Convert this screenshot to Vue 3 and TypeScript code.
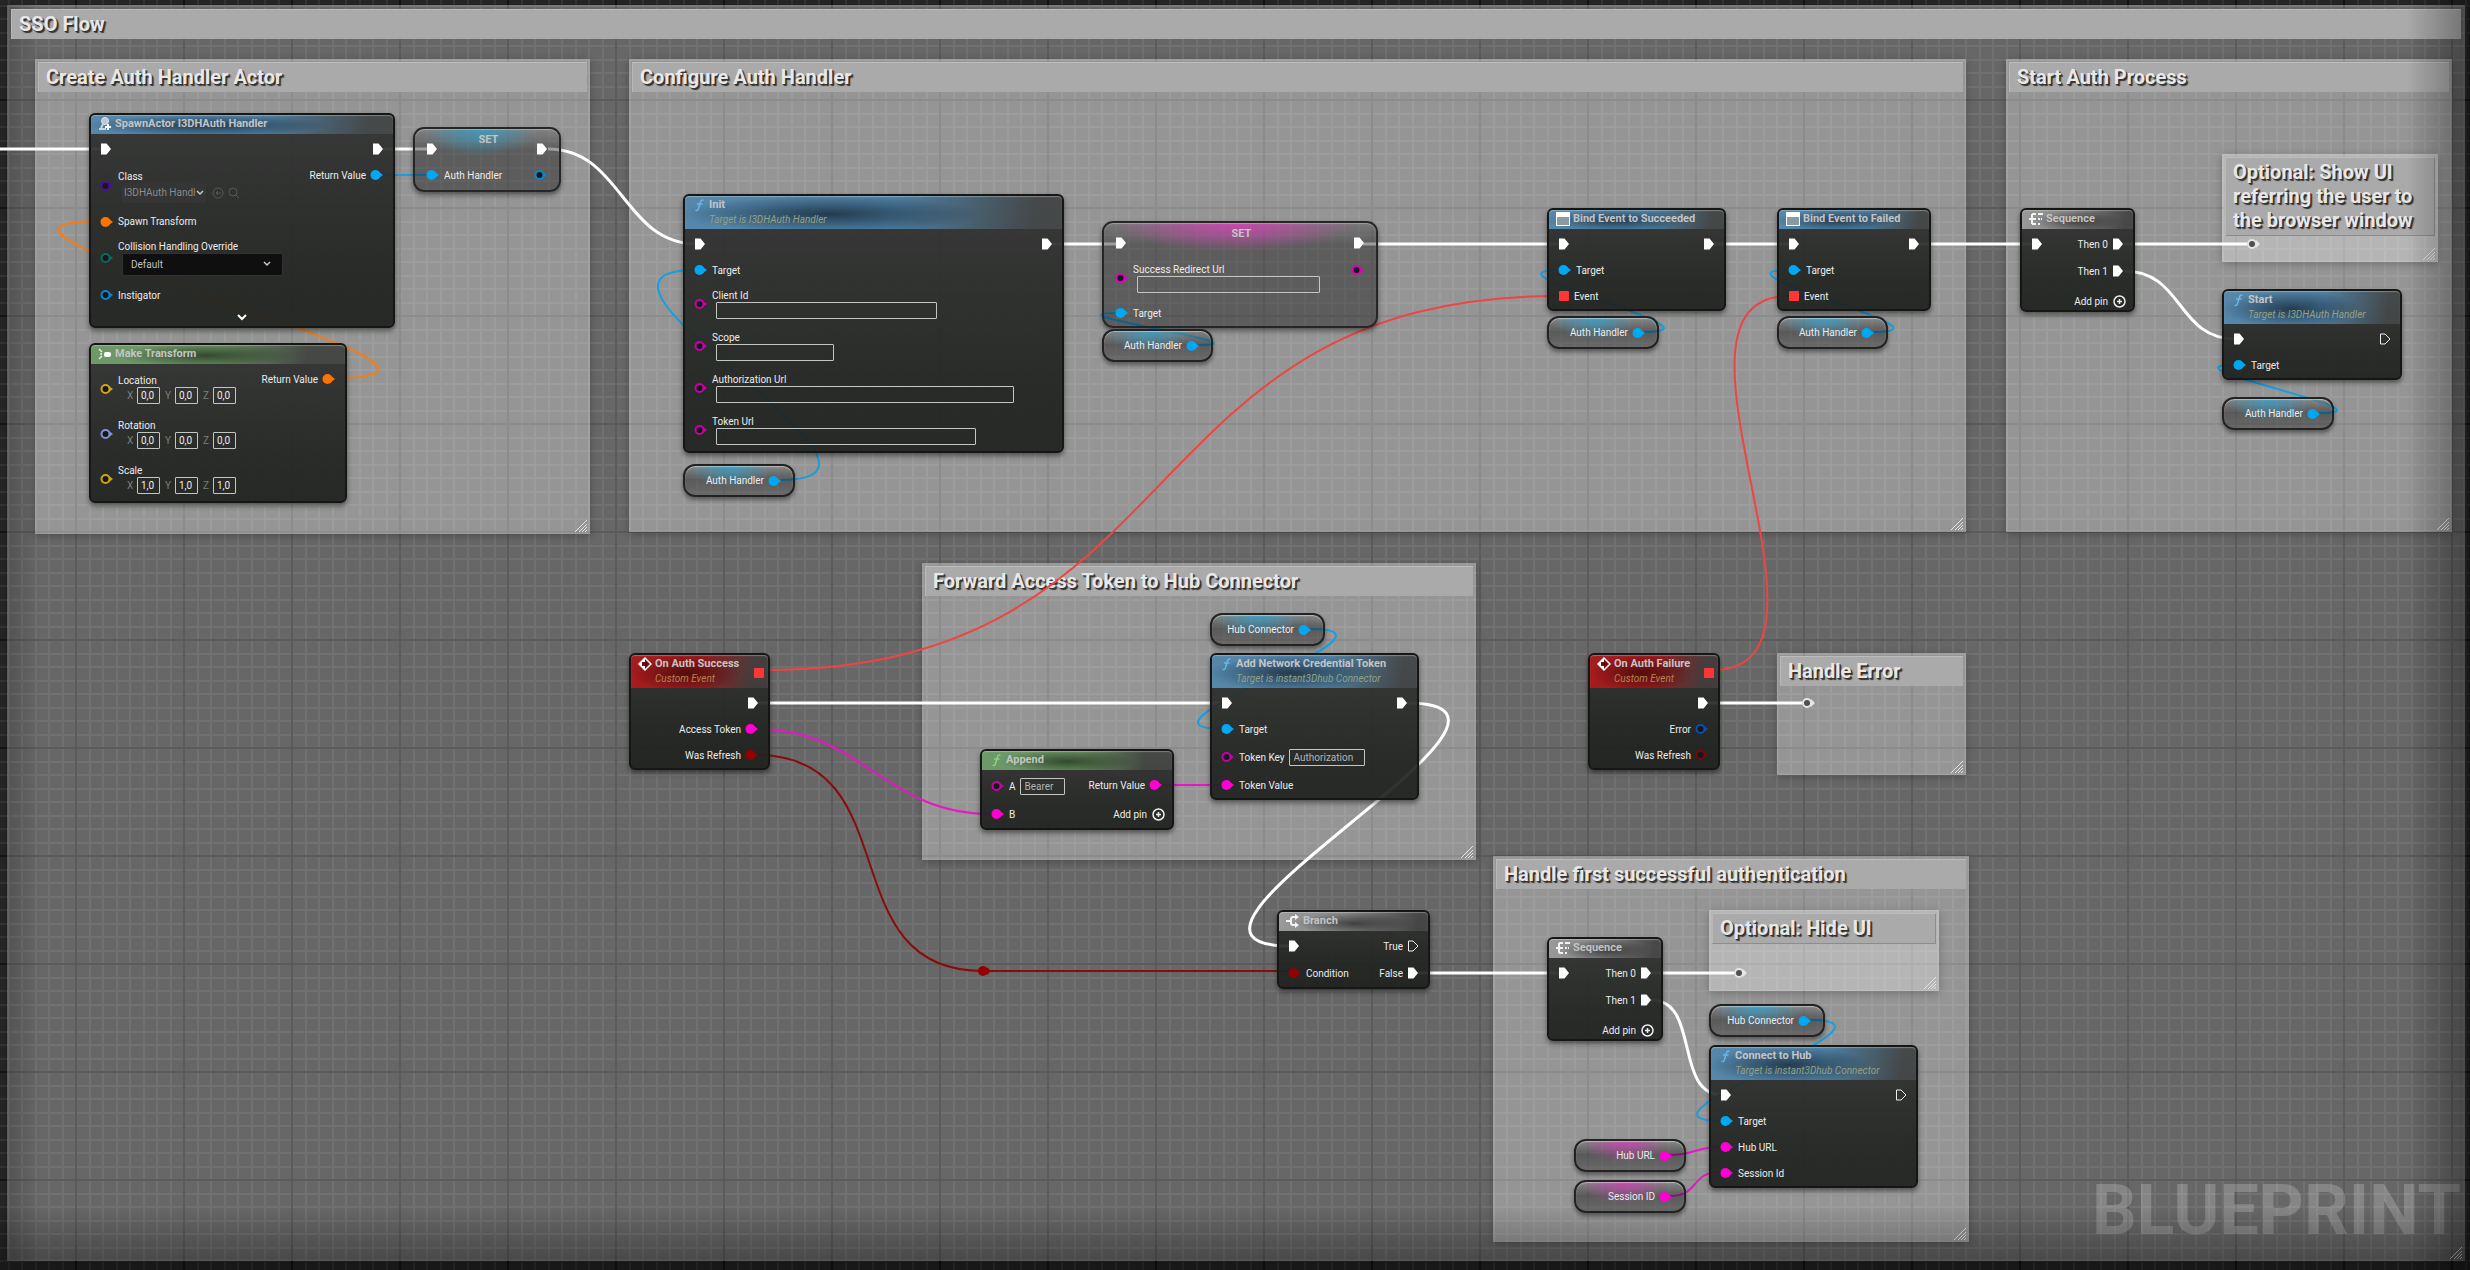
<script setup lang="ts">
type PinKind = 'exec' | 'data' | 'delegate'

interface Field {
  kind: 'text' | 'asset' | 'select' | 'vector'
  value?: string
  width?: number
  inline?: boolean
}

interface Row {
  h: number
  pin?: PinKind
  color?: string
  open?: boolean
  label?: string
  field?: Field
  addPin?: boolean
}

interface GraphNode {
  id: string
  x: number
  y: number
  w: number
  title: string
  sub?: string
  tone: 'blue' | 'green' | 'red' | 'gray' | 'set-blue' | 'set-pink'
  icon?: 'spawn' | 'make' | 'func' | 'bind' | 'sequence' | 'branch' | 'event'
  ins: Row[]
  outs: Row[]
  expand?: boolean
  delegateOut?: boolean
}

interface Comment {
  title: string
  x: number
  y: number
  w: number
  h: number
  nested?: boolean
}

interface Variable {
  label: string
  x: number
  y: number
  w: number
  tone: 'blue' | 'pink'
}

interface Wire {
  d: string
  kind: string
}

const BLUE = '#00a8f4'
const PINK = '#ff00d4'
const MAGENTA = '#c800a8'
const RED = '#930000'

const exec = (h = 26): Row => ({ h, pin: 'exec' })
const target = (h = 26): Row => ({ h, pin: 'data', color: BLUE, label: 'Target' })
const urlField = (label: string, width: number): Row => ({
  h: 42, pin: 'data', color: MAGENTA, open: true, label, field: { kind: 'text', width }
})
const vector = (label: string, value: string, color: string, h: number): Row => ({
  h, pin: 'data', color, open: true, label, field: { kind: 'vector', value }
})
const sequenceOuts = (): Row[] => [
  { h: 26, pin: 'exec', label: 'Then 0' },
  { h: 28, pin: 'exec', label: 'Then 1' },
  { h: 17, addPin: true }
]

const comments: Comment[] = [
  { title: 'Create Auth Handler Actor', x: 35, y: 59, w: 555, h: 475 },
  { title: 'Configure Auth Handler', x: 629, y: 59, w: 1337, h: 473 },
  { title: 'Start Auth Process', x: 2006, y: 59, w: 446, h: 473 },
  { title: 'Optional: Show UI referring the user to the browser window', x: 2222, y: 154, w: 216, h: 108, nested: true },
  { title: 'Forward Access Token to Hub Connector', x: 922, y: 563, w: 554, h: 297 },
  { title: 'Handle Error', x: 1777, y: 653, w: 189, h: 122 },
  { title: 'Handle first successful authentication', x: 1493, y: 856, w: 476, h: 386 },
  { title: 'Optional: Hide UI', x: 1709, y: 910, w: 230, h: 81, nested: true }
]

const nodes: GraphNode[] = [
  {
    id: 'spawn', x: 89, y: 113, w: 306, title: 'SpawnActor I3DHAuth Handler', tone: 'blue', icon: 'spawn', expand: true,
    ins: [
      exec(),
      { h: 48, pin: 'data', color: '#4b0d9c', open: true, label: 'Class', field: { kind: 'asset', value: 'I3DHAuth Handl' } },
      { h: 23, pin: 'data', color: '#ff7300', label: 'Spawn Transform' },
      { h: 49, pin: 'data', color: '#0b6a5b', open: true, label: 'Collision Handling Override', field: { kind: 'select', value: 'Default' } },
      { h: 26, pin: 'data', color: '#0a86cc', open: true, label: 'Instigator' }
    ],
    outs: [exec(), { h: 26, pin: 'data', color: BLUE, label: 'Return Value' }]
  },
  {
    id: 'set-handler', x: 413, y: 127, w: 148, title: 'SET', tone: 'set-blue',
    ins: [exec(), { h: 26, pin: 'data', color: BLUE, label: 'Auth Handler' }],
    outs: [exec(), { h: 26, pin: 'data', color: '#0a86cc', open: true }]
  },
  {
    id: 'transform', x: 89, y: 343, w: 258, title: 'Make Transform', tone: 'green', icon: 'make',
    ins: [
      vector('Location', '0,0', '#d3a313', 45),
      vector('Rotation', '0,0', '#8591d6', 45),
      vector('Scale', '1,0', '#d3a313', 45)
    ],
    outs: [{ h: 26, pin: 'data', color: '#ff7300', label: 'Return Value' }]
  },
  {
    id: 'init', x: 683, y: 194, w: 381, title: 'Init', sub: 'Target is I3DHAuth Handler', tone: 'blue', icon: 'func',
    ins: [exec(), target(), urlField('Client Id', 221), urlField('Scope', 118), urlField('Authorization Url', 298), urlField('Token Url', 260)],
    outs: [exec()]
  },
  {
    id: 'set-url', x: 1102, y: 221, w: 276, title: 'SET', tone: 'set-pink',
    ins: [
      exec(),
      { h: 44, pin: 'data', color: '#e000bb', open: true, label: 'Success Redirect Url', field: { kind: 'text', width: 183 } },
      target(26)
    ],
    outs: [exec(), { h: 28, pin: 'data', color: '#e000bb', open: true }]
  },
  {
    id: 'bind-ok', x: 1547, y: 208, w: 179, title: 'Bind Event to Succeeded', tone: 'blue', icon: 'bind',
    ins: [exec(), target(), { h: 26, pin: 'delegate', label: 'Event' }],
    outs: [exec()]
  },
  {
    id: 'bind-fail', x: 1777, y: 208, w: 154, title: 'Bind Event to Failed', tone: 'blue', icon: 'bind',
    ins: [exec(), target(), { h: 26, pin: 'delegate', label: 'Event' }],
    outs: [exec()]
  },
  { id: 'seq-start', x: 2020, y: 208, w: 115, title: 'Sequence', tone: 'gray', icon: 'sequence', ins: [exec()], outs: sequenceOuts() },
  {
    id: 'start', x: 2222, y: 289, w: 180, title: 'Start', sub: 'Target is I3DHAuth Handler', tone: 'blue', icon: 'func',
    ins: [exec(), target()],
    outs: [{ h: 26, pin: 'exec', open: true }]
  },
  {
    id: 'on-success', x: 629, y: 653, w: 141, title: 'On Auth Success', sub: 'Custom Event', tone: 'red', icon: 'event', delegateOut: true,
    ins: [],
    outs: [exec(), { h: 26, pin: 'data', color: PINK, label: 'Access Token' }, { h: 26, pin: 'data', color: RED, label: 'Was Refresh' }]
  },
  {
    id: 'append', x: 980, y: 749, w: 194, title: 'Append', tone: 'green', icon: 'func',
    ins: [
      { h: 28, pin: 'data', color: MAGENTA, open: true, label: 'A', field: { kind: 'text', value: 'Bearer', width: 45, inline: true } },
      { h: 28, pin: 'data', color: PINK, label: 'B' }
    ],
    outs: [{ h: 26, pin: 'data', color: PINK, label: 'Return Value' }, { h: 17, addPin: true }]
  },
  {
    id: 'credential', x: 1210, y: 653, w: 209, title: 'Add Network Credential Token', sub: 'Target is instant3Dhub Connector', tone: 'blue', icon: 'func',
    ins: [
      exec(),
      target(),
      { h: 30, pin: 'data', color: MAGENTA, open: true, label: 'Token Key', field: { kind: 'text', value: 'Authorization', width: 76, inline: true } },
      { h: 26, pin: 'data', color: PINK, label: 'Token Value' }
    ],
    outs: [exec()]
  },
  {
    id: 'branch', x: 1277, y: 910, w: 153, title: 'Branch', tone: 'gray', icon: 'branch',
    ins: [exec(), { h: 28, pin: 'data', color: RED, label: 'Condition' }],
    outs: [{ h: 26, pin: 'exec', open: true, label: 'True' }, { h: 28, pin: 'exec', label: 'False' }]
  },
  {
    id: 'on-failure', x: 1588, y: 653, w: 132, title: 'On Auth Failure', sub: 'Custom Event', tone: 'red', icon: 'event', delegateOut: true,
    ins: [],
    outs: [
      exec(),
      { h: 26, pin: 'data', color: '#0a4fae', open: true, label: 'Error' },
      { h: 26, pin: 'data', color: '#7a0707', open: true, label: 'Was Refresh' }
    ]
  },
  { id: 'seq-auth', x: 1547, y: 937, w: 116, title: 'Sequence', tone: 'gray', icon: 'sequence', ins: [exec()], outs: sequenceOuts() },
  {
    id: 'connect', x: 1709, y: 1045, w: 209, title: 'Connect to Hub', sub: 'Target is instant3Dhub Connector', tone: 'blue', icon: 'func',
    ins: [
      exec(),
      target(),
      { h: 26, pin: 'data', color: PINK, label: 'Hub URL' },
      { h: 26, pin: 'data', color: PINK, label: 'Session Id' }
    ],
    outs: [{ h: 26, pin: 'exec', open: true }]
  }
]

const variables: Variable[] = [
  { label: 'Auth Handler', x: 683, y: 464, w: 112, tone: 'blue' },
  { label: 'Auth Handler', x: 1102, y: 329, w: 111, tone: 'blue' },
  { label: 'Auth Handler', x: 1547, y: 316, w: 112, tone: 'blue' },
  { label: 'Auth Handler', x: 1777, y: 316, w: 111, tone: 'blue' },
  { label: 'Auth Handler', x: 2222, y: 397, w: 112, tone: 'blue' },
  { label: 'Hub Connector', x: 1210, y: 613, w: 115, tone: 'blue' },
  { label: 'Hub Connector', x: 1709, y: 1004, w: 116, tone: 'blue' },
  { label: 'Hub URL', x: 1574, y: 1139, w: 112, tone: 'pink' },
  { label: 'Session ID', x: 1574, y: 1180, w: 112, tone: 'pink' }
]

/* A spline leaves its output and enters its input horizontally; reach is the handle length. */
const curve = (x1: number, y1: number, x2: number, y2: number, reach: number) =>
  `M${x1} ${y1} C${x1 + reach} ${y1} ${x2 - reach} ${y2} ${x2} ${y2}`

const wires: Wire[] = [
  { kind: 'exec', d: 'M0 149 H104' },
  { kind: 'exec', d: 'M383 149 H430' },
  { kind: 'exec', d: curve(548, 149, 697, 244, 74) },
  { kind: 'exec', d: 'M1052 244 H1117' },
  { kind: 'exec', d: 'M1363 244 H1561' },
  { kind: 'exec', d: 'M1714 244 H1791' },
  { kind: 'exec', d: 'M1919 244 H2034' },
  { kind: 'exec', d: 'M2124 244 H2247' },
  { kind: 'exec', d: curve(2124, 271, 2236, 339, 60) },
  { kind: 'exec', d: 'M758 703 H1224' },
  { kind: 'exec', d: curve(1407, 703, 1291, 946, 180) },
  { kind: 'exec', d: 'M1418 973 H1561' },
  { kind: 'exec', d: 'M1651 973 H1734' },
  { kind: 'exec', d: curve(1651, 1000, 1723, 1095, 50) },
  { kind: 'exec', d: 'M1708 703 H1802' },
  { kind: 'object', d: 'M380 175 H430' },
  { kind: 'object', d: curve(781, 480, 696, 270, 160) },
  { kind: 'object', d: curve(1198, 345, 1117, 313, 78) },
  { kind: 'object', d: curve(1644, 332, 1561, 270, 93) },
  { kind: 'object', d: curve(1874, 332, 1790, 270, 92) },
  { kind: 'object', d: curve(2319, 413, 2236, 365, 86) },
  { kind: 'object', d: curve(1311, 629, 1223, 729, 113) },
  { kind: 'object', d: curve(1810, 1020, 1722, 1121, 113) },
  { kind: 'transform', d: curve(334, 378, 103, 221, 217) },
  { kind: 'delegate', d: curve(764, 670, 1559, 296, 434) },
  { kind: 'delegate', d: curve(1713, 670, 1789, 296, 150) },
  { kind: 'string', d: curve(755, 729, 992, 814, 110) },
  { kind: 'string', d: 'M1159 785 H1222' },
  { kind: 'string', d: curve(1669, 1155, 1721, 1147, 26) },
  { kind: 'string', d: curve(1669, 1196, 1721, 1172, 32) },
  { kind: 'bool', d: curve(756, 755, 983, 971, 155) },
  { kind: 'bool', d: 'M983 971 H1289' }
]

const reroutes = [
  { x: 2252, y: 244 },
  { x: 1807, y: 703 },
  { x: 1739, y: 973 }
]

const minor = [14, 27, 41, 54, 68, 81, 95]
const sides = ['ins', 'outs'] as const
const place = (item: { x: number; y: number; w: number; h?: number }) => ({
  left: `${item.x}px`,
  top: `${item.y}px`,
  width: `${item.w}px`,
  height: item.h ? `${item.h}px` : undefined
})
</script>

<template>
  <main class="graph">
    <svg class="layer" aria-hidden="true">
      <defs>
        <pattern id="grid" x="75" y="99" width="108" height="108" patternUnits="userSpaceOnUse">
          <g fill="#343434">
            <template v-for="m in minor" :key="m">
              <rect :x="m" y="0" width="2" height="108" />
              <rect x="0" :y="m" width="108" height="2" />
            </template>
          </g>
          <rect width="2" height="108" fill="#151515" />
          <rect width="108" height="2" fill="#151515" />
        </pattern>
      </defs>
      <rect width="100%" height="100%" fill="url(#grid)" />
    </svg>

    <section class="comment root">
      <h1 class="comment-title">SSO Flow</h1>
      <svg class="grip" viewBox="0 0 12 12" aria-hidden="true"><path d="M0 12 L12 0 M4 12 L12 4 M7 12 L12 7 M10 12 L12 10" /></svg>
    </section>

    <section v-for="c in comments" :key="c.title" class="comment" :class="{ nested: c.nested }" :style="place(c)">
      <h2 class="comment-title">{{ c.title }}</h2>
      <svg class="grip" viewBox="0 0 12 12" aria-hidden="true"><path d="M0 12 L12 0 M4 12 L12 4 M7 12 L12 7 M10 12 L12 10" /></svg>
    </section>

    <svg class="layer wires" aria-hidden="true">
      <path v-for="w in wires" :key="w.d" :class="w.kind" :d="w.d" />
      <g v-for="r in reroutes" :key="r.x" :transform="`translate(${r.x} ${r.y})`">
        <path d="M4 -4 L8 0 L4 4 Z" fill="#e6e6e6" />
        <circle r="4" fill="#505050" stroke="#e6e6e6" stroke-width="2" />
      </g>
      <circle cx="983" cy="971" r="5" fill="#930000" />
      <path d="M987 967 L991 971 L987 975 Z" fill="#930000" />
    </svg>

    <article v-for="n in nodes" :key="n.id" class="node" :class="n.tone" :style="place(n)">
      <header class="head" :class="{ tall: n.sub }">
        <svg v-if="n.icon === 'spawn'" class="icon" viewBox="0 0 14 14">
          <circle cx="7" cy="4" r="3.500" fill="#b9cbd8" stroke="#dfe8ee" />
          <path d="M5 7 L3 11 M1 12 H8" fill="none" stroke="#c9d6df" stroke-width="2" />
          <path d="M10 7 V13 M7 10 H13" stroke="#fff" stroke-width="2" />
        </svg>
        <svg v-else-if="n.icon === 'make'" class="icon" viewBox="0 0 14 14">
          <path d="M1 2 L4 5 M1 12 L4 9 M2 7 H4" stroke="#e8eee6" stroke-width="1.500" />
          <rect x="6" y="5" width="7" height="5" rx="2" fill="#fff" />
        </svg>
        <svg v-else-if="n.icon === 'func'" class="icon" viewBox="0 0 14 14">
          <path d="M11.500 2.500 Q9.500 1 8.500 4 L6.500 10.500 Q5.500 13.500 3.500 12 M5 6 H10.500" fill="none" :stroke="n.tone === 'green' ? '#86d386' : '#69b7ea'" stroke-width="1.500" />
        </svg>
        <svg v-else-if="n.icon === 'bind'" class="icon" viewBox="0 0 14 14">
          <rect x="0.500" y="0.500" width="13" height="13" fill="#8a9aa5" stroke="#fff" />
          <rect x="1" y="1" width="12" height="4" fill="#fff" />
        </svg>
        <svg v-else-if="n.icon === 'sequence'" class="icon" viewBox="0 0 14 14">
          <path d="M0 7 H7 M3 2 V12 M3 2 H7 M3 12 H7 M9 2 H14 M9 7 H11 M12 7 H13 M9 12 H11" fill="none" stroke="#f2f2f2" stroke-width="2" />
        </svg>
        <svg v-else-if="n.icon === 'branch'" class="icon" viewBox="0 0 14 14">
          <path d="M0 7 H5 M10 3 H7 Q5 3 5 5 V9 Q5 11 7 11 H10" fill="none" stroke="#f2f2f2" stroke-width="2" />
          <path d="M9 0 L13 3 L9 6 Z M9 8 L13 11 L9 14 Z" fill="#f2f2f2" />
        </svg>
        <svg v-else-if="n.icon === 'event'" class="icon" viewBox="0 0 14 14">
          <path d="M7 1 L13 7 L7 13 L1 7 Z" fill="#7a1112" stroke="#fff" stroke-width="1.500" />
          <path d="M7 1 V5 H4 V9 H7 V13 L1 7 Z" fill="#fff" />
          <path d="M7 4 L10 7 L7 10 V8 H5 V6 H7 Z" fill="#5a0d0e" />
        </svg>
        <div class="titles">
          <h3 class="title">{{ n.title }}</h3>
          <p v-if="n.sub" class="sub">{{ n.sub }}</p>
        </div>
        <i v-if="n.delegateOut" class="delegate-out"></i>
      </header>

      <div class="body">
        <div v-for="side in sides" :key="side" class="pins" :class="side">
          <div v-for="(r, i) in n[side]" :key="i" class="row" :class="{ adder: r.addPin }" :style="{ height: `${r.h}px` }">
            <button v-if="r.addPin" class="add-pin" type="button">
              Add pin
              <svg width="13" height="13" viewBox="0 0 13 13" aria-hidden="true">
                <circle cx="6.500" cy="6.500" r="5.500" fill="none" stroke="#eee" stroke-width="1.500" />
                <path d="M6.500 4 V9 M4 6.500 H9" stroke="#eee" stroke-width="1.500" />
              </svg>
            </button>
            <template v-else>
              <svg v-if="r.pin === 'exec'" class="pin-exec" viewBox="0 0 12 12">
                <path v-if="r.open" d="M1.500 1 H6 L11 6 L6 11 H1.500 Z" fill="none" stroke="#eee" />
                <path v-else d="M1 0.500 H6.500 L11 6 L6.500 11.500 H1 Z" fill="#fff" />
              </svg>
              <svg v-else-if="r.pin === 'delegate'" class="pin-exec" viewBox="0 0 12 12">
                <rect x="1" y="1" width="10" height="10" rx="1" fill="#ff3636" />
              </svg>
              <svg v-else class="pin-data" viewBox="0 0 14 12">
                <path d="M9 3 L13 6 L9 9 Z" :fill="r.color" />
                <circle v-if="r.open" cx="5.500" cy="6" r="4" fill="#14181a" :stroke="r.color" stroke-width="2" />
                <circle v-else cx="5.500" cy="6" r="5" :fill="r.color" />
              </svg>

              <div v-if="r.field" class="slot" :class="{ inline: r.field.inline }">
                <template v-if="r.field.kind === 'text'">
                  <label :for="`${n.id}-${i}`">{{ r.label }}</label>
                  <input :id="`${n.id}-${i}`" class="text-field" type="text" :value="r.field.value" :style="{ width: `${r.field.width}px` }" />
                </template>
                <template v-else-if="r.field.kind === 'asset'">
                  <label :for="`${n.id}-${i}`">{{ r.label }}</label>
                  <div class="asset">
                    <div class="picker asset-picker">
                      <select :id="`${n.id}-${i}`"><option>{{ r.field.value }}</option></select>
                      <svg class="caret" viewBox="0 0 8 6"><path d="M1 1 L4 4 L7 1" /></svg>
                    </div>
                    <button class="tool" type="button" aria-label="Use selected">
                      <svg viewBox="0 0 12 12"><circle cx="6" cy="6" r="5" /><path d="M9 6 H4 M6 4 L4 6 L6 8" /></svg>
                    </button>
                    <button class="tool" type="button" aria-label="Browse">
                      <svg viewBox="0 0 12 12"><circle cx="5" cy="5" r="4" /><path d="M8 8 L11 11" /></svg>
                    </button>
                  </div>
                </template>
                <template v-else-if="r.field.kind === 'select'">
                  <label :for="`${n.id}-${i}`">{{ r.label }}</label>
                  <div class="picker enum-picker">
                    <select :id="`${n.id}-${i}`"><option>{{ r.field.value }}</option></select>
                    <svg class="caret" viewBox="0 0 8 6"><path d="M1 1 L4 4 L7 1" /></svg>
                  </div>
                </template>
                <template v-else>
                  <span>{{ r.label }}</span>
                  <div class="vector">
                    <template v-for="axis in ['X', 'Y', 'Z']" :key="axis">
                      <label class="axis" :for="`${n.id}-${i}-${axis}`">{{ axis }}</label>
                      <input :id="`${n.id}-${i}-${axis}`" class="text-field number" type="text" :value="r.field.value" />
                    </template>
                  </div>
                </template>
              </div>
              <span v-else-if="r.label">{{ r.label }}</span>
            </template>
          </div>
        </div>
      </div>

      <button v-if="n.expand" class="expand" type="button" aria-label="Show advanced pins">
        <svg width="10" height="8" viewBox="0 0 10 8"><path d="M1 2 L5 6 L9 2" fill="none" stroke="#fff" stroke-width="2" /></svg>
      </button>
    </article>

    <article v-for="(v, i) in variables" :key="i" class="variable" :class="v.tone" :style="place(v)">
      <span>{{ v.label }}</span>
      <svg class="pin-data" viewBox="0 0 14 12">
        <path d="M9 3 L13 6 L9 9 Z" :fill="v.tone === 'blue' ? BLUE : PINK" />
        <circle cx="5.500" cy="6" r="5" :fill="v.tone === 'blue' ? BLUE : PINK" />
      </svg>
    </article>

    <div class="watermark">BLUEPRINT</div>
    <div class="vignette"></div>
  </main>
</template>

<style>
body {
  margin: 0;
  background: #262626;
}
</style>

<style scoped>
.graph {
  position: relative;
  min-height: 100vh;
  overflow: hidden;
  background: #262626;
  color: #ececec;
  font: 10px/13px Roboto, "Liberation Sans", sans-serif;
}

.graph * {
  box-sizing: border-box;
}

.layer {
  position: absolute;
  inset: 0;
  width: 100%;
  height: 100%;
}

/* comment boxes */
.comment {
  position: absolute;
  padding: 3px;
  background: rgba(255, 255, 255, 0.3);
  box-shadow: 0 2px 8px rgba(0, 0, 0, 0.25), inset 0 0 0 2px rgba(255, 255, 255, 0.05);
}

.comment.root {
  inset: 5px 5px 9px 7px;
  padding: 4px;
  background: linear-gradient(to right, rgba(0, 0, 0, 0.2), transparent 34px), rgba(255, 255, 255, 0.3);
}

.comment-title {
  margin: 0;
  padding: 2px 7px 3px;
  background: #aaa;
  border-top: 1px solid #bcbcbc;
  border-left: 1px solid #b8b8b8;
  color: #e8e8e8;
  font-size: 20px;
  font-weight: 700;
  line-height: 24px;
  text-shadow: 1px 1px 0 #333, 2px 2px 1px #333;
}

.nested .comment-title {
  border-right: 1px solid #8c8c8c;
  border-bottom: 1px solid #8c8c8c;
}

.grip {
  position: absolute;
  right: 3px;
  bottom: 2px;
  width: 12px;
  height: 12px;
  fill: none;
  stroke: #e4e4e4;
}

/* wires */
.wires path[class] {
  fill: none;
  stroke-width: 2;
}

.wires path.exec {
  stroke: #fff;
  stroke-width: 3;
}

.wires .object {
  stroke: #169fe0;
}

.wires .transform {
  stroke: #f57c14;
}

.wires .delegate {
  stroke: #ef4444;
}

.wires .string {
  stroke: #ea14c8;
}

.wires .bool {
  stroke: #8a0c0c;
}

/* nodes */
.node {
  position: absolute;
  border: 2px solid #151715;
  border-radius: 6px;
  background: linear-gradient(rgba(48, 49, 48, 0.92), rgba(32, 35, 32, 0.92) 70%, rgba(30, 32, 30, 0.92));
  box-shadow: 0 3px 5px rgba(0, 0, 0, 0.45);
}

.head {
  display: flex;
  gap: 3px;
  height: 19px;
  padding: 2px 4px 0 7px;
  border-radius: 4px 4px 0 0;
  box-shadow: inset 0 1px 1px rgba(255, 255, 255, 0.3);
}

.head.tall {
  height: 33px;
}

.blue .head {
  background: radial-gradient(ellipse 40% 55% at 38% 55%, rgba(20, 36, 50, 0.75), transparent), linear-gradient(100deg, #5688ab 0%, #4d7fa3 55%, rgba(80, 84, 86, 0.6) 92%);
}

.green .head {
  background: radial-gradient(ellipse 35% 60% at 45% 55%, rgba(32, 50, 28, 0.75), transparent), linear-gradient(100deg, #6e9a68 0%, #688f60 50%, rgba(80, 84, 80, 0.6) 85%);
}

.red .head {
  background: radial-gradient(ellipse 40% 55% at 40% 55%, rgba(60, 8, 8, 0.75), transparent), linear-gradient(100deg, #a81c1e 0%, #9a1a1c 50%, rgba(80, 70, 70, 0.6) 88%);
}

.gray .head {
  background: radial-gradient(ellipse 40% 55% at 50% 60%, rgba(40, 40, 40, 0.7), transparent), linear-gradient(100deg, #9a9a9a 0%, #848484 45%, rgba(84, 84, 84, 0.6) 92%);
}

.icon {
  flex: none;
  width: 14px;
  height: 14px;
}

.titles {
  flex: 1;
  white-space: nowrap;
}

.title {
  margin: 0;
  color: #c4c4c4;
  font-size: 11px;
  font-weight: 700;
  line-height: 14px;
}

.sub {
  margin: 1px 0 0;
  color: #93a183;
  font-size: 10px;
  font-style: italic;
  line-height: 14px;
}

.red .sub {
  color: #b28355;
}

.delegate-out {
  flex: none;
  align-self: center;
  width: 10px;
  height: 10px;
  border-radius: 1px;
  background: #ff3636;
}

.body {
  display: flex;
  justify-content: space-between;
  padding: 2px 9px 0;
}

.row {
  display: flex;
  align-items: center;
  gap: 4px;
  white-space: nowrap;
}

.outs .row {
  flex-direction: row-reverse;
}

.row.adder {
  margin: 8px -2px 0 0;
}

.pin-exec {
  flex: none;
  width: 12px;
  height: 12px;
}

.pin-data {
  flex: none;
  width: 14px;
  height: 12px;
}

/* setter nodes have a see-through plate and no title bar */
.set-blue,
.set-pink {
  border-color: #262626;
  border-radius: 11px;
}

.set-blue {
  background: radial-gradient(ellipse 40% 45% at 45% 0, rgba(40, 160, 205, 0.75), transparent), linear-gradient(rgba(110, 110, 110, 0.5), rgba(0, 0, 0, 0.38) 35%);
}

.set-pink {
  background: radial-gradient(ellipse 45% 28% at 48% 0, rgba(214, 62, 184, 0.85), transparent), linear-gradient(rgba(90, 90, 90, 0.5), rgba(0, 0, 0, 0.38) 22%);
}

.set-blue .head,
.set-pink .head {
  height: 24px;
  margin-bottom: -19px;
  border-radius: 9px 9px 0 0;
  text-align: center;
}

.set-blue .title,
.set-pink .title {
  padding-top: 2px;
}

.set-blue .body {
  padding: 2px 11px;
}

.set-pink .body {
  padding: 2px 11px 0;
}

/* fields */
.slot {
  display: flex;
  flex-direction: column;
}

.slot.inline {
  flex-direction: row;
  align-items: center;
  gap: 4px;
}

.text-field {
  height: 17px;
  margin-left: 4px;
  padding: 0 4px;
  border: 1px solid #c4c6c4;
  border-radius: 1px;
  background: transparent;
  color: #b4b4b4;
  font: inherit;
}

.inline .text-field {
  margin-left: 0;
}

.vector {
  display: flex;
  align-items: center;
  gap: 3px;
  margin-left: 9px;
}

.axis {
  width: 7px;
  color: #7c7c7c;
}

.text-field.number {
  width: 23px;
  margin: 0 2px 0 0;
  padding: 0 3px;
  color: #eee;
}

.picker {
  display: flex;
  align-items: center;
  margin-left: 4px;
}

.picker select {
  width: 100%;
  height: 100%;
  padding: 0 8px;
  border: 1px solid #303230;
  border-radius: 2px;
  background: #0f0f0f;
  color: #c0c0c0;
  font: inherit;
  appearance: none;
}

.enum-picker {
  width: 161px;
  height: 23px;
}

.asset-picker {
  width: 84px;
  height: 20px;
}

.asset-picker select {
  padding: 0 1px;
  border-color: #343534;
  background: #343534;
  color: #8b8b8b;
}

.caret {
  flex: none;
  width: 8px;
  height: 6px;
  margin-left: -20px;
  fill: none;
  stroke: #c8c8c8;
  stroke-width: 1.5px;
  pointer-events: none;
}

.asset-picker .caret {
  margin-left: -10px;
}

.asset {
  display: flex;
  align-items: center;
  gap: 4px;
}

.asset .tool:first-of-type {
  margin-left: 2px;
}

button {
  padding: 0;
  border: 0;
  background: none;
  color: inherit;
  font: inherit;
}

.tool {
  width: 12px;
  height: 12px;
}

.tool svg {
  display: block;
  fill: none;
  stroke: #575957;
}

.add-pin {
  display: flex;
  align-items: center;
  gap: 5px;
}

.expand {
  display: flex;
  justify-content: center;
  align-items: center;
  width: 100%;
  height: 18px;
}

/* variable getters */
.variable {
  position: absolute;
  display: flex;
  justify-content: flex-end;
  align-items: center;
  gap: 4px;
  height: 33px;
  padding-right: 11px;
  border: 2px solid #222;
  border-radius: 12px;
  box-shadow: 0 3px 4px rgba(0, 0, 0, 0.4), inset 0 1px 1px rgba(255, 255, 255, 0.45);
}

.variable.blue {
  background: radial-gradient(ellipse 40% 75% at 42% 0, rgba(50, 160, 205, 0.8), transparent), linear-gradient(rgba(120, 120, 120, 0.5), rgba(0, 0, 0, 0.4) 45%, rgba(60, 60, 60, 0.5));
}

.variable.pink {
  background: radial-gradient(ellipse 40% 75% at 45% 0, rgba(205, 60, 180, 0.8), transparent), linear-gradient(rgba(120, 120, 120, 0.5), rgba(0, 0, 0, 0.4) 45%, rgba(60, 60, 60, 0.5));
}

.watermark {
  position: absolute;
  right: 9px;
  bottom: 20px;
  color: rgba(255, 255, 255, 0.2);
  font-size: 70px;
  font-weight: 700;
  line-height: 80px;
}

.vignette {
  position: absolute;
  inset: 0;
  background:
    linear-gradient(to left, rgba(0, 0, 0, 0.35), transparent 64px),
    linear-gradient(to top, rgba(0, 0, 0, 0.35), transparent 64px);
  pointer-events: none;
}
</style>
